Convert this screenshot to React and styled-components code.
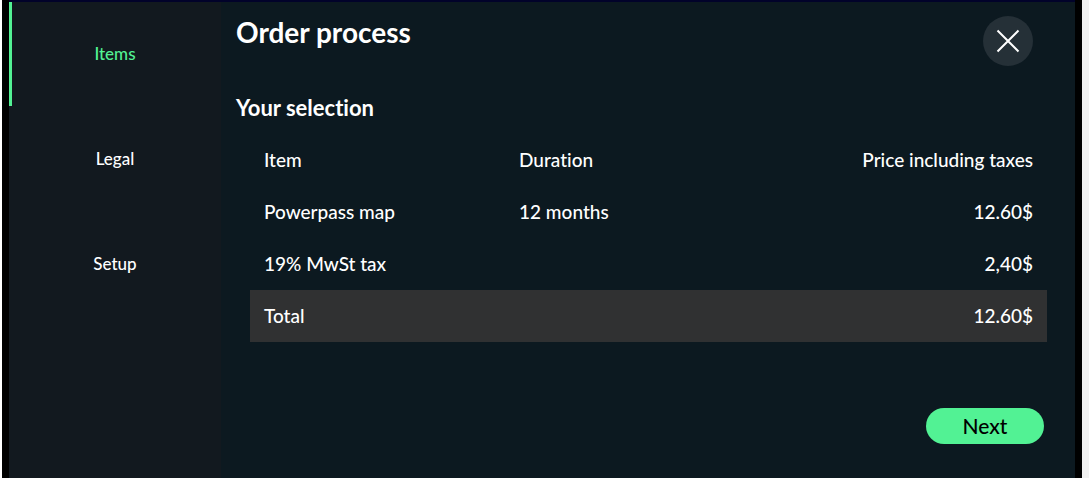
import React, { useState } from "react";
import styled, { createGlobalStyle } from "styled-components";

const GlobalStyle = createGlobalStyle`
  * { box-sizing: border-box; }
  body {
    margin: 0;
    background: #f1f1f1;
    color: #ffffff;
    font-family: Lato, "Open Sans", sans-serif;
    font-variant-ligatures: none;
  }
  button { font-family: inherit; cursor: pointer; }
`;

const Page = styled.div`
  min-height: 100vh;
  display: flex;
  padding-right: 7px;
  border-left: 2px solid #ffffff;
`;

const Backdrop = styled.div`
  flex: 1;
  display: flex;
  padding: 0 7px;
  background: #000000;
`;

const Dialog = styled.section`
  flex: 1;
  display: flex;
  border-top: 2px solid #01022a;
  background: #0c1920;
`;

const Steps = styled.nav`
  flex: 0 0 212px;
  display: flex;
  flex-direction: column;
  gap: 1px;
  background: #12191f;
`;

const Step = styled.button`
  height: 104px;
  padding: 0 3px 0 0;
  border: 0;
  border-left: 3px solid ${(p) => (p.$active ? "#52f294" : "transparent")};
  background: none;
  color: ${(p) => (p.$active ? "#52f294" : "#ffffff")};
  font-size: 17px;
  font-weight: 500;
  line-height: 20px;
`;

const Content = styled.main`
  flex: 1;
  min-width: 0;
  padding: 14px 28px 32px 15px;
`;

const Header = styled.header`
  display: flex;
  justify-content: space-between;
  align-items: flex-start;
  padding-right: 14px;
`;

const Title = styled.h1`
  margin: 0;
  font-size: 28px;
  font-weight: 700;
  line-height: 32px;
`;

const CloseButton = styled.button`
  display: flex;
  align-items: center;
  justify-content: center;
  width: 50px;
  height: 50px;
  padding: 0;
  border: 0;
  border-radius: 50%;
  background: #253037;
  color: #ffffff;
`;

const Subtitle = styled.h2`
  margin: 28px 0 12px;
  font-size: 22px;
  font-weight: 700;
  line-height: 28px;
`;

const OrderTable = styled.table`
  width: calc(100% - 14px);
  margin-left: 14px;
  border-collapse: collapse;
  table-layout: fixed;
`;

const Row = styled.tr`
  height: 52px;
  background: ${(p) => (p.$total ? "#303132" : "transparent")};
`;

const Cell = styled.td`
  width: ${(p) => p.$width || "auto"};
  padding: 0 14px;
  font-size: 19px;
  font-weight: 500;
  line-height: 24px;
  text-align: ${(p) => (p.$end ? "right" : "left")};
`;

const Footer = styled.footer`
  display: flex;
  justify-content: flex-end;
  padding: 66px 3px 0 0;
`;

const NextButton = styled.button`
  width: 118px;
  height: 36px;
  padding: 0;
  border: 0;
  border-radius: 18px;
  background: #52f294;
  color: #000000;
  font-size: 21px;
  font-weight: 500;
  line-height: 24px;
`;

const steps = ["Items", "Legal", "Setup"];

const rows = [
  { item: "Powerpass map", duration: "12 months", price: "12.60$" },
  { item: "19% MwSt tax", duration: "", price: "2,40$" },
  { item: "Total", duration: "", price: "12.60$", total: true },
];

export default function App() {
  const [active, setActive] = useState(0);
  return (
    <Page>
      <GlobalStyle />
      <Backdrop>
        <Dialog aria-labelledby="order-title">
          <Steps aria-label="Order steps">
            {steps.map((step, i) => (
              <Step key={step} $active={i === active} onClick={() => setActive(i)}>
                {step}
              </Step>
            ))}
          </Steps>
          <Content>
            <Header>
              <Title id="order-title">Order process</Title>
              <CloseButton aria-label="Close">
                <svg width="24" height="24" viewBox="0 0 24 24" fill="none" stroke="currentColor" strokeWidth="2">
                  <path d="M1.5 1.5 22.5 22.5M22.5 1.5 1.5 22.5" />
                </svg>
              </CloseButton>
            </Header>
            <Subtitle>Your selection</Subtitle>
            <OrderTable>
              <thead>
                <Row>
                  <Cell as="th" scope="col" $width="32%">Item</Cell>
                  <Cell as="th" scope="col" $width="32%">Duration</Cell>
                  <Cell as="th" scope="col" $end>Price including taxes</Cell>
                </Row>
              </thead>
              <tbody>
                {rows.map((row) => (
                  <Row key={row.item} $total={row.total}>
                    <Cell>{row.item}</Cell>
                    <Cell>{row.duration}</Cell>
                    <Cell $end>{row.price}</Cell>
                  </Row>
                ))}
              </tbody>
            </OrderTable>
            <Footer>
              <NextButton>Next</NextButton>
            </Footer>
          </Content>
        </Dialog>
      </Backdrop>
    </Page>
  );
}
